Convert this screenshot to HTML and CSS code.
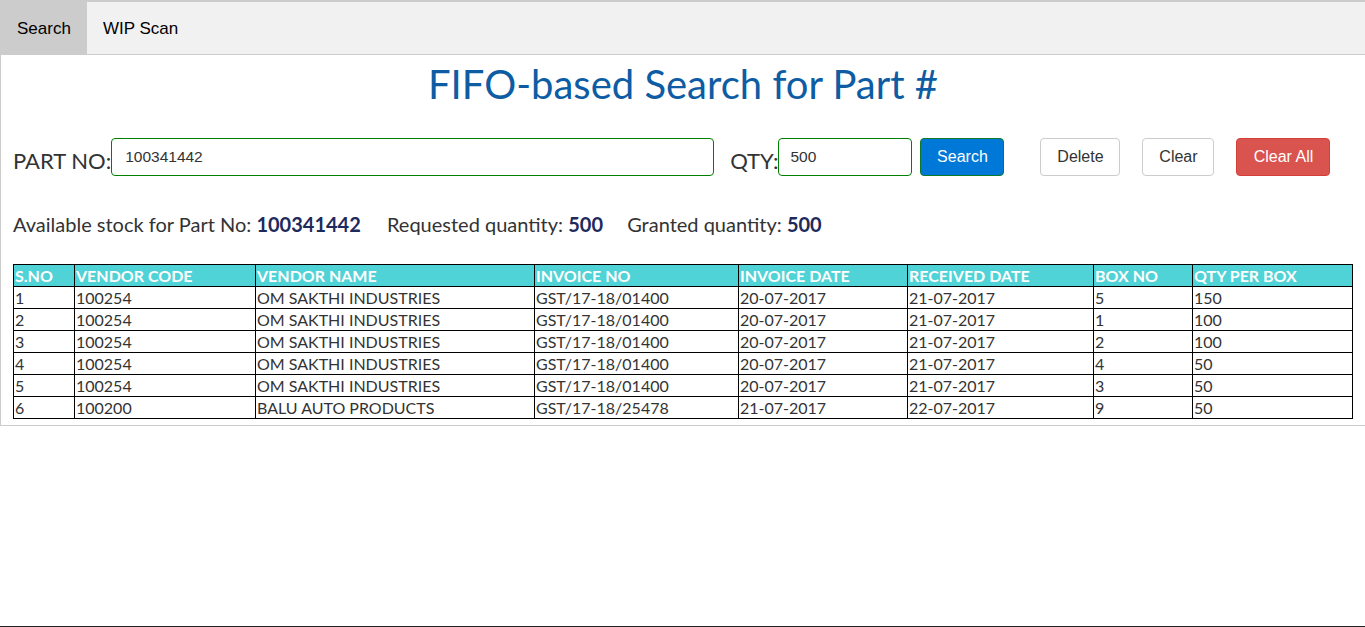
FILE: index.html
```html
<!DOCTYPE html>
<html lang="en">
<head>
<meta charset="utf-8">
<title>FIFO-based Search for Part #</title>
<link rel="stylesheet" href="styles.css">
</head>
<body>
<div class="page">
  <div class="tabs">
    <button class="tab active">Search</button>
    <button class="tab">WIP Scan</button>
  </div>
  <div class="panel">
    <h1 class="title">FIFO-based Search for Part #</h1>
    <div class="search-row">
      <label class="lbl">PART NO:</label>
      <input class="inp inp-part" type="text" value="100341442">
      <label class="lbl lbl-qty">QTY:</label>
      <input class="inp inp-qty" type="text" value="500">
      <button class="btn btn-search">Search</button>
      <button class="btn btn-plain btn-delete">Delete</button>
      <button class="btn btn-plain btn-clear">Clear</button>
      <button class="btn btn-danger">Clear All</button>
    </div>
    <div class="summary">
      <span class="item">Available stock for Part No: <b>100341442</b></span>
      <span class="item">Requested quantity: <b>500</b></span>
      <span class="item">Granted quantity: <b>500</b></span>
    </div>
    <table class="grid">
      <thead>
        <tr><th>S.NO</th><th>VENDOR CODE</th><th>VENDOR NAME</th><th>INVOICE NO</th><th>INVOICE DATE</th><th>RECEIVED DATE</th><th>BOX NO</th><th>QTY PER BOX</th></tr>
      </thead>
      <tbody>
        <tr><td>1</td><td>100254</td><td>OM SAKTHI INDUSTRIES</td><td>GST/17-18/01400</td><td>20-07-2017</td><td>21-07-2017</td><td>5</td><td>150</td></tr>
        <tr><td>2</td><td>100254</td><td>OM SAKTHI INDUSTRIES</td><td>GST/17-18/01400</td><td>20-07-2017</td><td>21-07-2017</td><td>1</td><td>100</td></tr>
        <tr><td>3</td><td>100254</td><td>OM SAKTHI INDUSTRIES</td><td>GST/17-18/01400</td><td>20-07-2017</td><td>21-07-2017</td><td>2</td><td>100</td></tr>
        <tr><td>4</td><td>100254</td><td>OM SAKTHI INDUSTRIES</td><td>GST/17-18/01400</td><td>20-07-2017</td><td>21-07-2017</td><td>4</td><td>50</td></tr>
        <tr><td>5</td><td>100254</td><td>OM SAKTHI INDUSTRIES</td><td>GST/17-18/01400</td><td>20-07-2017</td><td>21-07-2017</td><td>3</td><td>50</td></tr>
        <tr><td>6</td><td>100200</td><td>BALU AUTO PRODUCTS</td><td>GST/17-18/25478</td><td>21-07-2017</td><td>22-07-2017</td><td>9</td><td>50</td></tr>
      </tbody>
    </table>
  </div>
</div>
</body>
</html>
```

FILE: styles.css
```css
html, body {
  margin: 0;
  padding: 0;
  background: #fff;
}
body {
  font-family: Lato, "Liberation Sans", sans-serif;
  color: #333;
}
.page {
  min-height: 100vh;
  box-sizing: border-box;
  border-bottom: 1px solid #222;
}
.tabs {
  display: flex;
  background: #f1f1f1;
  border: 1px solid #ccc;
  border-top-width: 2px;
  border-right: none;
}
.tab {
  height: 52px;
  padding: 2px 16px 0;
  border: none;
  background: transparent;
  font-family: "Liberation Sans", Arial, sans-serif;
  font-size: 17px;
  color: #000;
  cursor: pointer;
}
.tab.active {
  background: #ccc;
}
.panel {
  padding: 6px 12px;
  border: 1px solid #ccc;
  border-top: none;
  border-right: none;
}
.title {
  margin: 0;
  font-family: Lato, sans-serif;
  font-weight: normal;
  font-size: 40px;
  line-height: 46px;
  text-align: center;
  color: #0d5ca4;
}
.search-row {
  display: flex;
  align-items: flex-start;
  margin-top: 31px;
}
.lbl {
  font-family: Lato, sans-serif;
  font-size: 22px;
  line-height: 26px;
  padding-top: 10px;
  color: #333;
}
.lbl-qty {
  margin-left: 16px;
}
.inp {
  box-sizing: border-box;
  height: 38px;
  border: 1px solid #008000;
  border-radius: 4px;
  padding: 0 13px 1px;
  font-family: "Liberation Sans", Arial, sans-serif;
  font-size: 15.5px;
  color: #333;
  outline: none;
}
.inp-part {
  width: 603px;
}
.inp-qty {
  width: 134px;
  padding-left: 11px;
}
.btn {
  box-sizing: border-box;
  height: 38px;
  border-radius: 4px;
  font-family: "Liberation Sans", Arial, sans-serif;
  font-size: 16px;
  padding: 0 8px 1px;
  cursor: pointer;
}
.btn-search {
  width: 84px;
  margin-left: 8px;
  background: #0078d7;
  color: #fff;
  border: 1px solid #0c7a2a;
}
.btn-plain {
  background: #fff;
  border: 1px solid #ccc;
  color: #333;
}
.btn-delete {
  width: 80px;
  margin-left: 36px;
}
.btn-clear {
  width: 72px;
  margin-left: 22px;
}
.btn-danger {
  width: 94px;
  margin-left: 22px;
  background: #d9534f;
  border: 1px solid #d43f3a;
  color: #fff;
}
.summary {
  margin-top: 36px;
  font-size: 20px;
  line-height: 24px;
  color: #333;
}
.summary .item {
  margin-right: 21px;
}
.summary .item:nth-child(2) {
  margin-right: 19px;
}
.summary b {
  color: #1e2a5c;
  font-weight: bold;
}
.grid {
  width: 100%;
  margin-top: 28px;
  border-collapse: collapse;
  font-size: 16px;
  table-layout: fixed;
}
.grid th, .grid td {
  border: 1px solid #000;
  padding: 1px 1px 0;
  height: 20px;
  line-height: 20px;
  text-align: left;
  white-space: nowrap;
  overflow: hidden;
}
.grid th {
  background: #4fd3d6;
  color: #fff;
  font-weight: bold;
}
.grid td {
  color: #333;
}
.grid th:nth-child(1) { width: 58px; }
.grid th:nth-child(2) { width: 178px; }
.grid th:nth-child(3) { width: 276px; }
.grid th:nth-child(4) { width: 201px; }
.grid th:nth-child(5) { width: 166px; }
.grid th:nth-child(6) { width: 183px; }
.grid th:nth-child(7) { width: 96px; }
```
